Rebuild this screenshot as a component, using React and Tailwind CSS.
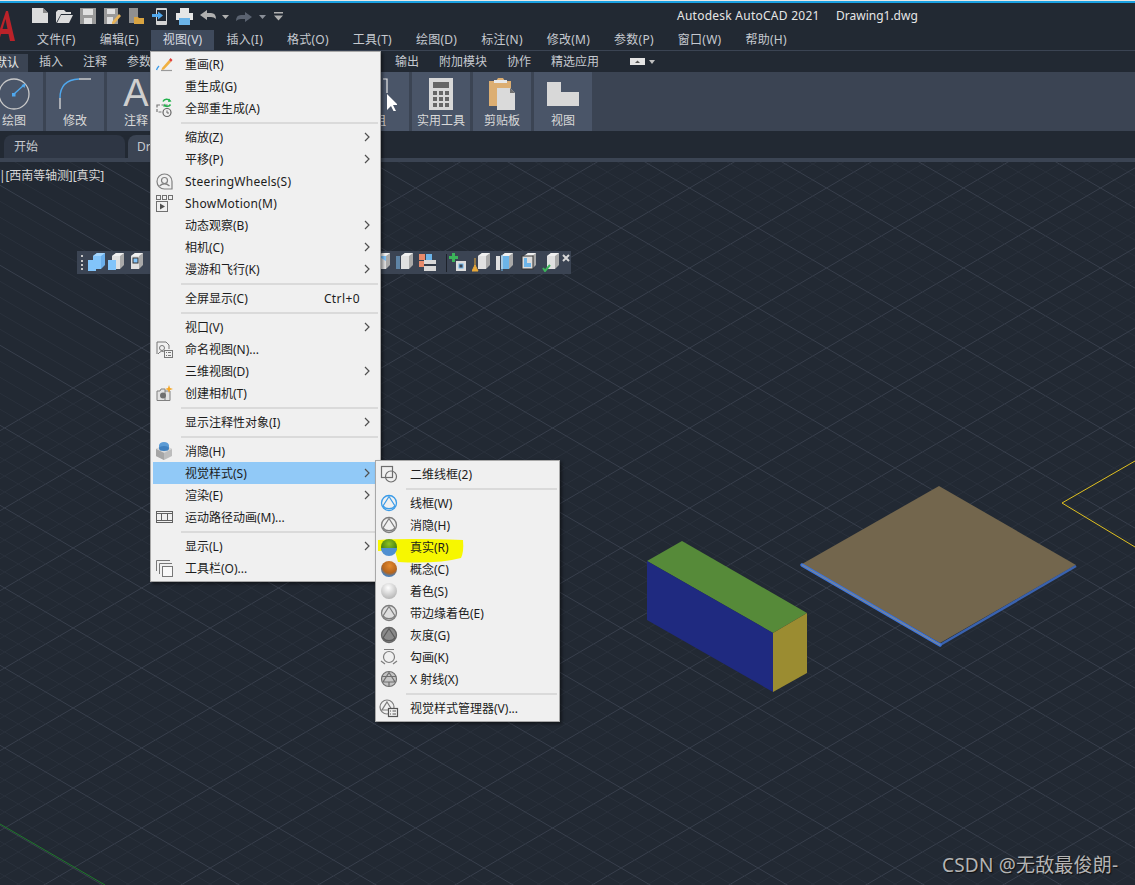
import React from 'react';

const menuFont = { fontFamily: '"Noto Sans", "Noto Sans CJK SC", sans-serif' };

const menuBar = ['文件(F)', '编辑(E)', '视图(V)', '插入(I)', '格式(O)', '工具(T)', '绘图(D)', '标注(N)', '修改(M)', '参数(P)', '窗口(W)', '帮助(H)'];
const tabsAfterMenu = ['输出', '附加模块', '协作', '精选应用'];

// canvas grid, in page coordinates
const K = 0.584;
const gridLines = [];
for (let i = -10; i < 110; i++) {
  const major = i % 5 === 0;
  const c = 185.3 + (i - 50) * 16;
  const d = 1390.7 + (i - 50) * 16;
  gridLines.push({ key: 'a' + i, major, y1: c, y2: c + K * 1135 });
  gridLines.push({ key: 'b' + i, major, y1: d, y2: d - K * 1135 });
}

const Sphere = ({ id, from, to, children }) => (
  <svg width="18" height="18" viewBox="0 0 18 18">
    <defs>
      <radialGradient id={id} cx="45%" cy="30%" r="70%">
        <stop offset="0%" stopColor={from} />
        <stop offset="100%" stopColor={to} />
      </radialGradient>
    </defs>
    <circle cx="9" cy="9" r="8" fill={`url(#${id})`} />
    {children}
  </svg>
);

const Wire = ({ color = '#7d7d7d', fill = 'none', tri = '#7d7d7d' }) => (
  <svg width="18" height="18" viewBox="0 0 18 18" fill="none">
    <circle cx="9" cy="9" r="7.5" stroke={color} strokeWidth="1.3" fill={fill} />
    <path d="M9 2.5 L15 12 A8 8 0 0 1 3 12 Z" stroke={tri} strokeWidth="1.2" />
  </svg>
);

const subIcons = {
  frame: (
    <svg width="18" height="18" viewBox="0 0 18 18" fill="none" stroke="#6e6e6e" strokeWidth="1.2">
      <rect x="1.5" y="1.5" width="11" height="11" />
      <circle cx="11" cy="11.5" r="5.5" />
    </svg>
  ),
  wire: <Wire color="#3a9be8" tri="#3a9be8" />,
  hidden: <Wire />,
  real: (
    <svg width="18" height="18" viewBox="0 0 18 18">
      <defs>
        <radialGradient id="realTop" cx="50%" cy="30%" r="70%">
          <stop offset="0%" stopColor="#8fc21f" />
          <stop offset="100%" stopColor="#2f6a10" />
        </radialGradient>
      </defs>
      <circle cx="9" cy="9" r="8" fill="url(#realTop)" />
      <path d="M1 10 H17 A8 8 0 0 1 1 10 Z" fill="#4f8fd0" />
    </svg>
  ),
  concept: (
    <svg width="18" height="18" viewBox="0 0 18 18">
      <defs>
        <radialGradient id="conceptTop" cx="55%" cy="30%" r="65%">
          <stop offset="0%" stopColor="#e58a2e" />
          <stop offset="70%" stopColor="#b5651d" />
          <stop offset="100%" stopColor="#4a7fb8" />
        </radialGradient>
      </defs>
      <circle cx="9" cy="9" r="8" fill="url(#conceptTop)" />
    </svg>
  ),
  shaded: <Sphere id="shadedS" from="#ffffff" to="#b5b5b5" />,
  edged: <Wire fill="#dedede" />,
  gray: <Wire color="#666666" fill="#8a8a8a" tri="#5a5a5a" />,
  sketch: (
    <svg width="18" height="18" viewBox="0 0 18 18" fill="none" stroke="#7d7d7d" strokeWidth="1.2">
      <path d="M4 1.5 H14 M1 13 L5 16 M17 13 L13 16" />
      <circle cx="9" cy="9" r="5.5" />
    </svg>
  ),
  xray: (
    <svg width="18" height="18" viewBox="0 0 18 18" fill="#c4c4c4" stroke="#6e6e6e" strokeWidth="1.2">
      <circle cx="9" cy="9" r="7.5" />
      <path d="M9 2.5 L15 12 H3 Z M2 6.5 H16 M9 12 V16" fill="none" />
    </svg>
  ),
  manager: (
    <svg width="20" height="20" viewBox="0 0 20 20" fill="none" stroke="#7d7d7d" strokeWidth="1.2">
      <circle cx="8" cy="9" r="7" />
      <path d="M8 4 L13 12 H3 Z" />
      <rect x="9.5" y="10.5" width="9" height="8" fill="#f0f0f0" stroke="#555555" />
      <path d="M11 13 h1 M13.5 13 h3.5 M11 16 h1 M13.5 16 h3.5" stroke="#555555" />
    </svg>
  ),
};

const menuIcons = {
  redraw: (
    <svg width="18" height="18" viewBox="0 0 18 18" fill="none">
      <path d="M1.5 15 A10 10 0 0 1 4 11" stroke="#3a9be8" strokeWidth="1.3" />
      <path d="M6 15.5 H17" stroke="#9a9a9a" strokeWidth="1.2" />
      <path d="M7 13 L14 5 L16 7 L9 14.5 L6.5 15 Z" fill="#f0b040" />
      <path d="M14 5 L15.5 3 L17.5 5 L16 7 Z" fill="#e0403a" />
    </svg>
  ),
  regen: (
    <svg width="18" height="20" viewBox="0 0 18 20" fill="none">
      <path d="M2 7 H12 V14 H2 Z" stroke="#777777" strokeWidth="1.2" strokeDasharray="3 1.5" />
      <circle cx="12" cy="14.5" r="4" stroke="#666666" fill="#f0f0f0" strokeWidth="1.2" />
      <path d="M12 12.5 V15 H14" stroke="#666666" />
      <path d="M8 3.5 A4 4 0 0 1 15 3 M15.5 6.5 A4 4 0 0 1 9.5 7.5" stroke="#22b14c" strokeWidth="1.5" />
      <path d="M14 0.5 L16.5 3.5 L13 4 Z M10 5.5 L8 8.5 L11.5 8.5 Z" fill="#22b14c" />
    </svg>
  ),
  wheel: (
    <svg width="17" height="17" viewBox="0 0 17 17" fill="none" stroke="#808080" strokeWidth="1.2">
      <path d="M8.5 1 A7.5 7.5 0 1 0 8.5 16 H16 V8.5 A7.5 7.5 0 0 0 8.5 1 Z" />
      <circle cx="8.5" cy="7.5" r="3" />
      <path d="M3.5 13 Q8.5 8.5 13.5 13" />
    </svg>
  ),
  motion: (
    <svg width="17" height="17" viewBox="0 0 17 17" fill="none" stroke="#707070">
      <rect x="0.5" y="0.5" width="4" height="4" />
      <rect x="6.5" y="0.5" width="4" height="4" />
      <rect x="12.5" y="0.5" width="4" height="4" />
      <rect x="0.5" y="6.5" width="11" height="10" />
      <path d="M4 8.5 L9 11.5 L4 14.5 Z" fill="#505050" stroke="none" />
    </svg>
  ),
  named: (
    <svg width="17" height="17" viewBox="0 0 17 17" fill="none" stroke="#777777">
      <path d="M1 13 V1 H10 L13 4 V8" />
      <circle cx="6" cy="7" r="2.5" />
      <path d="M2 13 Q6 8 9 12" />
      <rect x="8.5" y="9.5" width="8" height="7" fill="#f0f0f0" />
      <path d="M10 11.5 h1 M12 11.5 h3 M10 14.5 h1 M12 14.5 h3" />
    </svg>
  ),
  camera: (
    <svg width="17" height="17" viewBox="0 0 17 17" fill="none">
      <path d="M1 6 H4 L5 4 H9 V15.5 H1 Z M9 6 H14 V15.5 H9" fill="#e4e4e4" stroke="#808080" />
      <circle cx="7" cy="10.5" r="3" fill="#707070" />
      <path d="M13 0 L14 3 L17 4 L14 5 L13 8 L12 5 L9 4 L12 3 Z" fill="#f5a623" />
    </svg>
  ),
  hide: (
    <svg width="18" height="18" viewBox="0 0 18 18">
      <path d="M1 7 L9 3 L17 7 V14 L9 18 L1 14 Z" fill="#bdbdbd" />
      <path d="M1 7 L9 11 L17 7 L9 3 Z" fill="#dadada" />
      <path d="M9 11 V18 L1 14 V7 Z" fill="#a6a6a6" />
      <ellipse cx="9" cy="3.5" rx="5" ry="3.5" fill="#5b9bd5" />
      <rect x="4" y="3.5" width="10" height="3" fill="#5b9bd5" />
      <ellipse cx="9" cy="6.5" rx="5" ry="2.5" fill="#3f80bf" />
    </svg>
  ),
  film: (
    <svg width="17" height="12" viewBox="0 0 17 12" fill="none" stroke="#606060">
      <path d="M0 0.5 H17 M0 11.5 H17 M0 2.5 H17 M0 9.5 H17 M5.5 2.5 V9.5 M11.5 2.5 V9.5 M0.5 0 V12 M16.5 0 V12" />
    </svg>
  ),
  toolbars: (
    <svg width="17" height="17" viewBox="0 0 17 17" fill="none" stroke="#777777">
      <path d="M0.5 11 V0.5 H14" />
      <path d="M3.5 14 V3.5 H16" />
      <rect x="6.5" y="6.5" width="10" height="10" fill="#f8f8f8" />
    </svg>
  ),
};

const Chevron = () => (
  <svg width="6" height="10" viewBox="0 0 6 10" fill="none" stroke="#505050" strokeWidth="1.2">
    <path d="M1 1 L5 5 L1 9" />
  </svg>
);

const mainMenu = [
  { t: '重画(R)', i: 'redraw' }, { t: '重生成(G)' }, { t: '全部重生成(A)', i: 'regen' }, 'sep',
  { t: '缩放(Z)', a: 1 }, { t: '平移(P)', a: 1 }, { t: 'SteeringWheels(S)', i: 'wheel', wide: 1 }, { t: 'ShowMotion(M)', i: 'motion', wide: 1 },
  { t: '动态观察(B)', a: 1 }, { t: '相机(C)', a: 1 }, { t: '漫游和飞行(K)', a: 1 }, 'sep',
  { t: '全屏显示(C)', s: 'Ctrl+0' }, 'sep',
  { t: '视口(V)', a: 1 }, { t: '命名视图(N)...', i: 'named' }, { t: '三维视图(D)', a: 1 }, { t: '创建相机(T)', i: 'camera' }, 'sep',
  { t: '显示注释性对象(I)', a: 1 }, 'sep',
  { t: '消隐(H)', i: 'hide' }, { t: '视觉样式(S)', a: 1, on: 1 }, { t: '渲染(E)', a: 1 }, { t: '运动路径动画(M)...', i: 'film' }, 'sep',
  { t: '显示(L)', a: 1 }, { t: '工具栏(O)...', i: 'toolbars' },
];

const subMenu = [
  { t: '二维线框(2)', i: 'frame' }, 'sep',
  { t: '线框(W)', i: 'wire' }, { t: '消隐(H)', i: 'hidden' }, { t: '真实(R)', i: 'real', mark: 1 }, { t: '概念(C)', i: 'concept' },
  { t: '着色(S)', i: 'shaded' }, { t: '带边缘着色(E)', i: 'edged' }, { t: '灰度(G)', i: 'gray' }, { t: '勾画(K)', i: 'sketch' }, { t: 'X 射线(X)', i: 'xray' }, 'sep',
  { t: '视觉样式管理器(V)...', i: 'manager' },
];

const MenuList = ({ items, icons }) => items.map((item, idx) => {
  if (item === 'sep') {
    return (
      <div key={idx} className="h-[7px] flex items-center pl-[28px]">
        <div className="h-[2px] w-full bg-[#dadada]" />
      </div>
    );
  }
  return (
    <div key={idx} className={`relative h-[22px] flex items-center pr-[8px] text-[12px] text-[#1c1c1c] ${item.on ? 'bg-[#91c9f7]' : ''}`}>
      {item.mark && (
        <svg className="absolute left-0 top-[2px]" width="86" height="26" viewBox="0 0 86 26">
          <path d="M0 2 Q30 0 85 2 Q86 14 83 20 Q60 26 20 24 L17 13 Q8 12 0 13 Z" fill="#f7f700" />
        </svg>
      )}
      <span className="relative w-[32px] shrink-0 flex justify-center pr-[10px]">{icons[item.i]}</span>
      <span className={`relative whitespace-nowrap pt-[1px] ${item.wide ? 'tracking-[0.25px]' : ''}`}>{item.t}</span>
      {item.s && <span className="ml-auto pr-[10px] pt-[1px] tracking-[0.4px]">{item.s}</span>}
      {item.a && <span className="ml-auto"><Chevron /></span>}
    </div>
  );
});

const Qat = ({ children }) => (
  <svg width="17" height="17" viewBox="0 0 17 17" className="shrink-0">{children}</svg>
);

const ribbon = [
  {
    t: '绘图',
    icon: (
      <svg width="34" height="34" viewBox="0 0 34 34" fill="none">
        <circle cx="17" cy="17" r="15" stroke="#c9c9c9" strokeWidth="1.3" />
        <path d="M17 17 L27 8" stroke="#4fa8ee" strokeWidth="1.4" />
        <rect x="15" y="16" width="3.5" height="3.5" fill="#4fa8ee" />
        <path d="M24.5 8 L28.5 6.5 L27.5 11 Z" fill="#4fa8ee" />
      </svg>
    ),
  },
  {
    t: '修改',
    icon: (
      <svg width="34" height="34" viewBox="0 0 34 34" fill="none">
        <path d="M2 32 V21" stroke="#dddddd" strokeWidth="1.3" />
        <path d="M2 21 Q2 3 21 2" stroke="#4fa8ee" strokeWidth="1.3" />
        <path d="M21 2 H33" stroke="#dddddd" strokeWidth="1.3" />
      </svg>
    ),
  },
  { t: '注释', letter: 1 },
  { t: '' },
  { t: '' },
  { t: '' },
  {
    t: '组',
    icon: (
      <svg width="34" height="34" viewBox="0 0 34 34" fill="none">
        <path d="M20 2 H24 V16" stroke="#e6e6e6" strokeWidth="1.2" />
        <path d="M24 17 V33 L28 29 L31 35 L33 34 L30 28 L35 28 Z" fill="#ffffff" />
      </svg>
    ),
  },
  {
    t: '实用工具',
    icon: (
      <svg width="24" height="32" viewBox="0 0 24 32">
        <rect width="24" height="32" fill="#d8d8d8" />
        <rect x="4" y="4" width="16" height="6" fill="#666666" />
        {[13, 19, 25].map(y => [4, 10, 16].map(x => <rect key={`${x}-${y}`} x={x} y={y} width="4" height="4" fill="#666666" />))}
      </svg>
    ),
  },
  {
    t: '剪贴板',
    icon: (
      <svg width="27" height="32" viewBox="0 0 27 32">
        <path d="M0 3 H7 L9 0 H14 L16 3 H22 V28 H0 Z" fill="#dcae72" />
        <rect x="5" y="2" width="13" height="3" fill="#e8e8e8" />
        <path d="M8 10 H21 L26 15 V32 H8 Z" fill="#dadada" />
        <path d="M21 10 L26 15 H21 Z" fill="#707070" />
      </svg>
    ),
  },
  {
    t: '视图',
    icon: (
      <svg width="32" height="24" viewBox="0 0 32 24">
        <path d="M0 0 H14 V10 H32 V24 H0 Z" fill="#d8d8d8" />
      </svg>
    ),
  },
];

const Cube = ({ body = '#e0e0e0', side = '#a9a9a9', top = '#f0f0f0', children }) => (
  <svg width="19" height="19" viewBox="0 0 19 19" className="shrink-0">
    <path d="M6 3 L10 0 H18 V12 L14 16 H6 Z" fill={side} />
    <path d="M6 3 L10 0 H18 L14 3 Z" fill={top} />
    <rect x="6" y="3" width="8" height="13" fill={body} />
    {children}
  </svg>
);

export default function App() {
  return (
    <div className="relative w-[1135px] h-[885px] overflow-hidden bg-[#222933] flex flex-col text-[#c6cad0]" style={menuFont}>
      {/* window edge */}
      <div className="h-[3px] shrink-0 border-t border-t-[#e8e8e8] bg-[#1ba1e2]" />

      {/* title row with quick access */}
      <div className="h-[27px] shrink-0 flex items-center relative">
        <svg className="absolute left-0 top-[8px]" width="16" height="30" viewBox="0 0 16 30">
          <path d="M-4 30 L6 0 H8 L15 30 H10 L8.5 23 H1 L-1 30 Z" fill="#bb2229" />
          <path d="M2.5 18 H7.5 L5.5 8 Z" fill="#222933" />
        </svg>
        <div className="flex items-center gap-[7px] pl-[32px] pb-[1px]">
          <Qat><path d="M0 0 H11 L16 5 V15 H0 Z" fill="#dcdcdc" /><path d="M11 0 L16 5 H11 Z" fill="#8a8a8a" /></Qat>
          <Qat><path d="M2 2 H8 L10 4 H15 V6 H5 L0 15 V4 Z" fill="#dcdcdc" /><path d="M5 7 H17 L13 15 H1 Z" fill="#dcdcdc" /></Qat>
          <Qat><path d="M0 0 H16 V16 H0 Z" fill="#9a9a9a" /><rect x="3" y="1" width="10" height="6" fill="#e0e0e0" /><rect x="4" y="10" width="8" height="6" fill="#e0e0e0" /></Qat>
          <Qat><path d="M0 0 H14 V16 H0 Z" fill="#9a9a9a" /><rect x="3" y="1" width="8" height="5" fill="#e0e0e0" /><rect x="3" y="9" width="6" height="7" fill="#e0e0e0" /><path d="M8 14 L15 6 L17 8 L10 16 H8 Z" fill="#e8b45a" /></Qat>
          <Qat><rect x="1" y="0" width="9" height="15" fill="#909090" /><path d="M6 9 H10 L11 10 H16 V16 H6 Z" fill="#d9a441" /></Qat>
          <Qat><rect x="4" y="0" width="11" height="17" rx="1" fill="#d4d4d4" /><rect x="5" y="2" width="9" height="11" fill="#222933" /><path d="M0 6 H6 V3.5 L11 7.5 L6 11.5 V9 H0 Z" fill="#4fa8ee" /></Qat>
          <Qat><rect x="4" y="0" width="9" height="5" fill="#e6e6e6" /><rect x="0" y="5" width="17" height="7" fill="#e6e6e6" /><rect x="3" y="10" width="11" height="7" fill="#6cb4e8" /></Qat>
          <Qat><path d="M0 7 L7 2 V5 H11 Q16 5 16 11 Q14 9 11 9 H7 V12 Z" fill="#b0b0b0" /></Qat>
        </div>
        <svg className="ml-[5px]" width="7" height="4" viewBox="0 0 7 4"><path d="M0 0 H7 L3.5 4 Z" fill="#b0b0b0" /></svg>
        <svg className="ml-[6px]" width="17" height="14" viewBox="0 0 17 14"><path d="M17 7 L10 2 V5 H6 Q1 5 1 11 Q3 9 6 9 H10 V12 Z" fill="#5a6270" /></svg>
        <svg className="ml-[7px]" width="7" height="4" viewBox="0 0 7 4"><path d="M0 0 H7 L3.5 4 Z" fill="#8a8f98" /></svg>
        <svg className="ml-[8px]" width="9" height="9" viewBox="0 0 9 9"><path d="M0 0 H9 V1.5 H0 Z M0 3.5 H9 L4.5 8.5 Z" fill="#b0b0b0" /></svg>
        <div className="absolute left-[677px] top-[4px] text-[12px] tracking-[0.25px] text-[#e6e6e6] whitespace-nowrap">Autodesk AutoCAD 2021</div>
        <div className="absolute left-[836px] top-[4px] text-[12px] text-[#e6e6e6] whitespace-nowrap">Drawing1.dwg</div>
      </div>

      {/* menu bar */}
      <div className="h-[21px] shrink-0 flex items-stretch pl-[25px] border-b border-b-[#3b4453] text-[12px] tracking-[0.25px]">
        {menuBar.map(m => (
          <div key={m} className={`px-3 flex items-center whitespace-nowrap ${m === '视图(V)' ? 'bg-[#3f4a5c] text-[#d8dce2]' : ''}`}>{m}</div>
        ))}
      </div>

      {/* ribbon tabs */}
      <div className="h-[21px] shrink-0 flex items-center gap-5 text-[12px] -ml-[5px]">
        <div className="self-end h-[18px] pl-[5px] pr-[9px] -mr-[9px] -ml-[5px] flex items-center bg-[#3b4453] text-[#e8e8e8]">默认</div>
        <div>插入</div>
        <div>注释</div>
        <div className="w-[36px]">参数</div>
        <div className="w-[192px]" />
        {tabsAfterMenu.map(t => <div key={t} className="whitespace-nowrap">{t}</div>)}
        <svg className="ml-[11px]" width="15" height="7" viewBox="0 0 15 7"><rect width="15" height="7" fill="#e4e4e4" /><path d="M5 5 L7.5 2.5 L10 5 Z" fill="#555555" /></svg>
        <svg className="-ml-[16px]" width="6" height="4" viewBox="0 0 6 4"><path d="M0 0 H6 L3 4 Z" fill="#c0c0c0" /></svg>
      </div>

      {/* ribbon panels */}
      <div className="h-[59px] shrink-0 bg-[#3b4453] flex items-stretch gap-[3px] -ml-[15px]">
        {ribbon.map((b, i) => (
          <div key={i} className="w-[58px] shrink-0 bg-[#4a5568] flex flex-col items-center justify-between pt-[3px] pb-[2px] overflow-hidden">
            <div className="h-[37px] flex items-center justify-center">
              {b.letter ? <span className="text-[38px] leading-[37px] text-[#cfcfcf]" style={{ fontFamily: '"Liberation Sans", sans-serif' }}>A</span> : b.icon}
            </div>
            <div className="text-[12px] leading-[16px] text-[#d9d9d9] whitespace-nowrap">{b.t}</div>
          </div>
        ))}
      </div>

      {/* file tabs */}
      <div className="h-[27px] shrink-0 flex items-end gap-[3px] pl-[4px] text-[12px]">
        <div className="w-[121px] h-[23px] rounded-t-[8px] bg-[#2e3644] flex items-center pl-[10px]">开始</div>
        <div className="w-[22px] h-[23px] rounded-tl-[8px] bg-[#3b4453] flex items-center pl-[9px]">Dr</div>
      </div>
      <div className="h-[4px] shrink-0 bg-[#3b4453]" />

      {/* model space */}
      <div className="relative flex-1">
        <svg className="absolute inset-0" width="1135" height="723" viewBox="0 162 1135 723">
          {gridLines.map(l => (
            <line key={l.key} x1="0" x2="1135" y1={l.y1} y2={l.y2} stroke={l.major ? '#383f4c' : '#2a313c'} strokeWidth="1" />
          ))}
          <path d="M0 824 L105 885" stroke="#1f7a2a" fill="none" />
          <path d="M1135 461 L1062 503 L1135 547" stroke="#e0c020" fill="none" />
          <path d="M647 561 L682 541 L807 613 L773 633 Z" fill="#568a39" />
          <path d="M647 561 L773 633 V692 L647 620 Z" fill="#1f2a80" />
          <path d="M773 633 L807 613 V673 L773 692 Z" fill="#9b8c31" />
          <path d="M939 486 L1076 565 L940 643 L802 564 Z" fill="#73664d" />
          <path d="M940 645 L1076 566" stroke="#3a62ae" strokeWidth="2.5" />
          <path d="M802 565 L940 645" stroke="#3f74d6" strokeWidth="3.5" strokeLinecap="round" />
          <path d="M802 565 L940 645" stroke="#9a8f70" strokeWidth="0.8" />
        </svg>
        <div className="absolute left-[-1px] top-[5px] text-[12px] tracking-[-0.1px] text-[#d8d8d8] whitespace-nowrap">|[西南等轴测][真实]</div>
        <div className="absolute left-[942px] top-[691px] text-[19px] leading-[24px] tracking-[0.2px] text-[#b4b4b4] whitespace-nowrap [text-shadow:1px_1px_1px_#111]">CSDN @无敌最俊朗-</div>

        {/* floating toolbar */}
        <div className="absolute left-[77px] top-[89px] w-[494px] h-[23px] bg-[#3b4453] flex items-center pl-[4px]">
          <div className="w-[2px] h-[15px] border-l-2 border-dotted border-l-[#c8c8c8] mr-[4px]" />
          <Cube body="#82c4fa" side="#6aaeea" top="#a6d6fc"><path d="M1 7 H9 V18 H1 Z" fill="#82c4fa" /></Cube>
          <Cube><path d="M2 7 H10 V17 H2 Z" fill="#82c4fa" /></Cube>
          <Cube><rect x="8" y="5" width="5" height="5" fill="#82c4fa" stroke="#333" /></Cube>
          <div className="ml-auto flex items-center gap-[4px] pr-[1px]">
            <Cube><path d="M6 3 L14 3 L14 8 Z" fill="#82c4fa" /></Cube>
            <Cube><path d="M1 4 H5 M2 5 V16 M4 5 V16" stroke="#82c4fa" fill="none" /></Cube>
            <svg width="18" height="18" viewBox="0 0 18 18" className="shrink-0">
              <rect x="1" y="0" width="6" height="6" fill="#e88a6a" /><rect x="8" y="0" width="6" height="6" fill="#6cb4e8" /><rect x="1" y="7" width="6" height="6" fill="#e88a6a" />
              <rect x="6" y="6" width="12" height="11" fill="#d8d8d8" /><rect x="6" y="10" width="12" height="2" fill="#333b48" />
            </svg>
            <div className="w-px h-[18px] bg-[#1d222b] ml-[6px] -mr-[2px]" />
            <svg width="19" height="19" viewBox="0 0 19 19" className="shrink-0">
              <path d="M3 0 H6 V3 H9 V6 H6 V9 H3 V6 H0 V3 H3 Z" fill="#3cb45a" />
              <rect x="7" y="8" width="10" height="10" fill="#dcdcdc" /><rect x="10" y="11" width="4" height="4" fill="#3b4453" stroke="#6cb4e8" />
            </svg>
            <Cube><path d="M3 5 V13 M0 18 L3 12 L6 18 Z" stroke="#e8a838" fill="#e8a838" /></Cube>
            <Cube><path d="M1 3 H5 V17 H1 Z" fill="#e0e0e0" /><path d="M7 2 V18" stroke="#6cb4e8" /><rect x="8" y="3" width="6" height="13" fill="#6cb4e8" /></Cube>
            <Cube><rect x="4" y="3" width="11" height="13" fill="#dcdcdc" stroke="#333" /><path d="M6 5 V14 H13 V10 H9 V5 Z" fill="#6cb4e8" /></Cube>
            <Cube><path d="M2 15 L4 18 L9 12" stroke="#3cb45a" strokeWidth="2" fill="none" /></Cube>
            <svg width="8" height="8" viewBox="0 0 8 8" className="shrink-0 -mt-[10px] -ml-[2px]"><path d="M1 1 L7 7 M7 1 L1 7" stroke="#d8d8d8" strokeWidth="2" /></svg>
          </div>
        </div>
      </div>

      {/* 视图 drop-down */}
      <div className="absolute left-[150px] top-[51px] w-[231px] bg-[#f0f0f0] border border-[#a8a8a8] p-[2px] pt-[1px] shadow-[2px_2px_3px_rgba(0,0,0,0.45)]">
        <MenuList items={mainMenu} icons={menuIcons} />
      </div>

      {/* 视觉样式 submenu */}
      <div className="absolute left-[375px] top-[460px] w-[185px] bg-[#f0f0f0] border border-[#a8a8a8] p-[2px] shadow-[2px_2px_3px_rgba(0,0,0,0.45)]">
        <MenuList items={subMenu} icons={subIcons} />
      </div>
    </div>
  );
}
